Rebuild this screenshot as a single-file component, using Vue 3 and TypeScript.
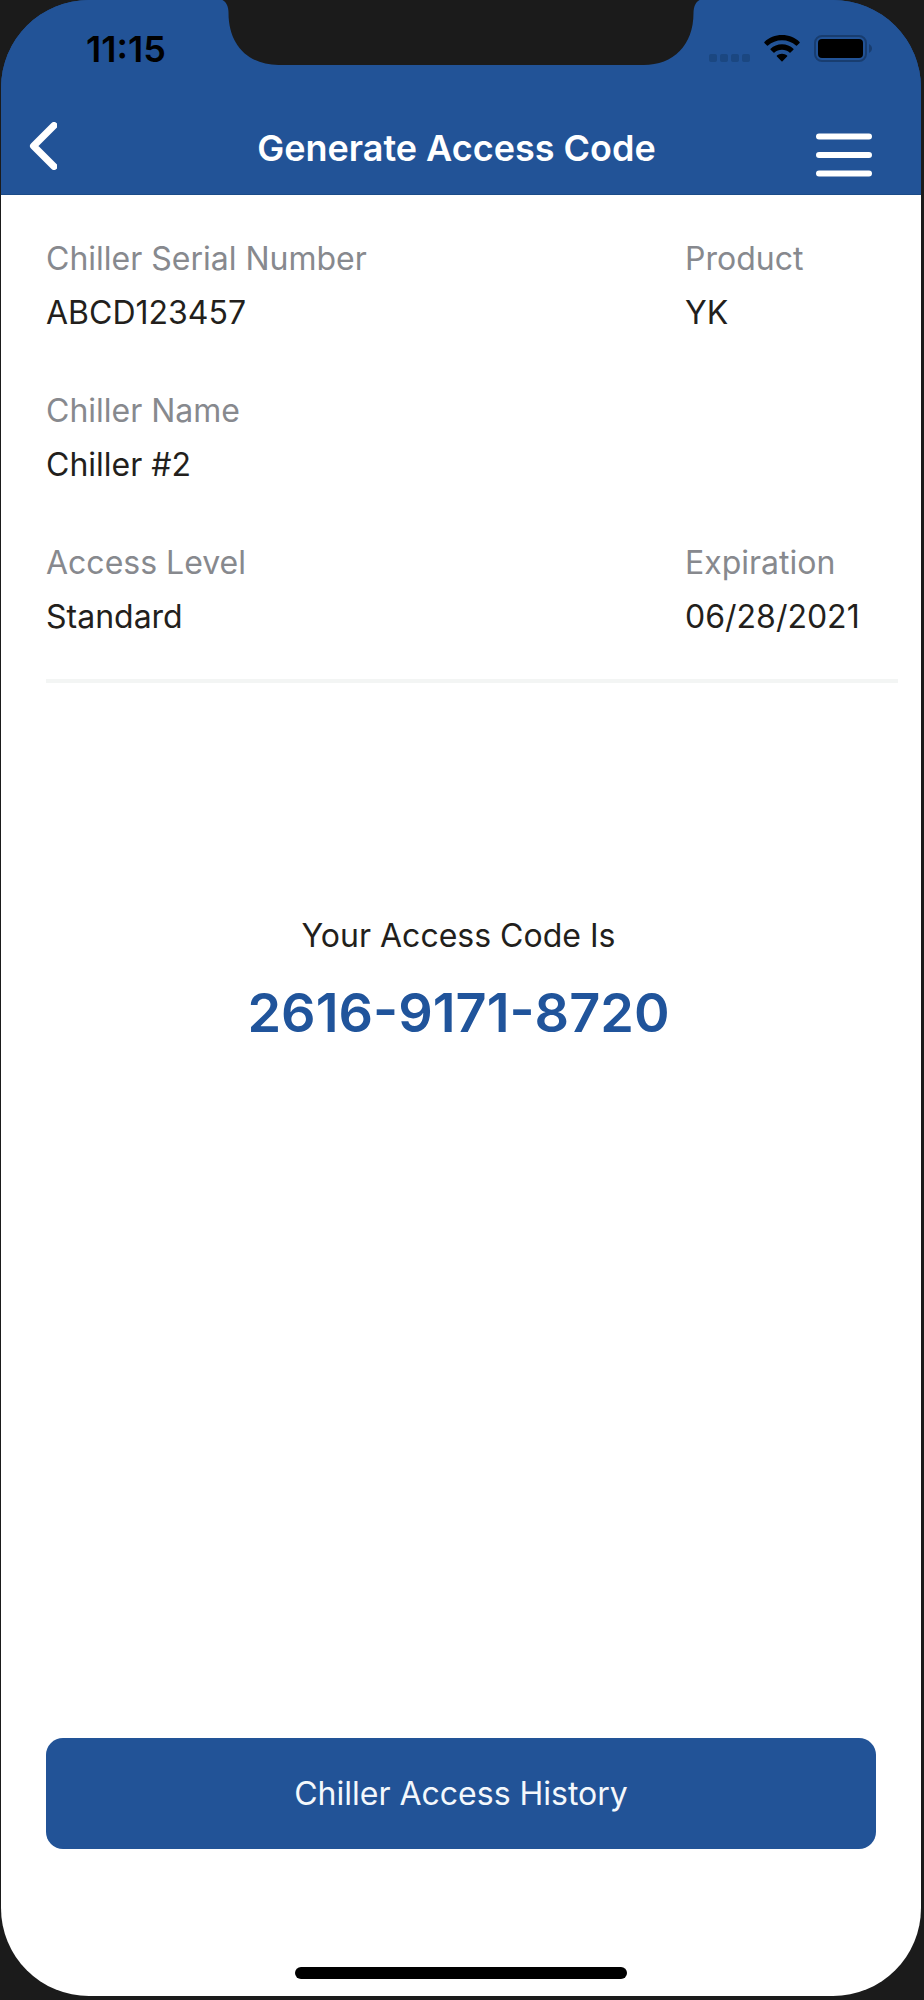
<script setup lang="ts">
interface Field {
  label: string
  value: string
}

const rows: Field[][] = [
  [
    { label: 'Chiller Serial Number', value: 'ABCD123457' },
    { label: 'Product', value: 'YK' },
  ],
  [{ label: 'Chiller Name', value: 'Chiller #2' }],
  [
    { label: 'Access Level', value: 'Standard' },
    { label: 'Expiration', value: '06/28/2021' },
  ],
]

const accessCode = '2616-9171-8720'
</script>

<template>
  <div class="device">
    <div class="screen">
      <svg class="notch" viewBox="0 0 481 66" aria-hidden="true">
        <path d="M2 0C6 2 8 7 8 13C8 45 28 65 58 65H423C453 65 473 45 473 13C473 7 475 2 479 0Z" />
      </svg>

      <header class="top">
        <div class="status">
          <time class="clock">11:15</time>
          <div class="indicators">
            <svg class="dots" viewBox="0 0 41 27" aria-hidden="true">
              <rect x="0" y="19" width="8" height="8" rx="2" />
              <rect x="11" y="19" width="8" height="8" rx="2" />
              <rect x="22" y="19" width="8" height="8" rx="2" />
              <rect x="33" y="19" width="8" height="8" rx="2" />
            </svg>
            <svg class="wifi" viewBox="0 0 36 27" aria-hidden="true">
              <path d="M18 0C11.200 0 5 2.600 .4 6.900Q0 7.400 .4 7.900L3 10.600Q3.500 11 4 10.600C7.700 7.200 12.600 5.300 18 5.300S28.300 7.200 32 10.600Q32.500 11 33 10.600L35.600 7.900Q36 7.400 35.600 6.900C31 2.600 24.800 0 18 0Z" />
              <path d="M18 9.300C13.600 9.300 9.600 11 6.600 13.700Q6.100 14.200 6.600 14.700L9.500 17.600Q10 18 10.500 17.600C12.500 15.800 15.100 14.800 18 14.800S23.500 15.800 25.500 17.600Q26 18 26.500 17.600L29.400 14.700Q29.900 14.200 29.400 13.700C26.400 11 22.400 9.300 18 9.300Z" />
              <path d="M18 18.700C16.100 18.700 14.300 19.400 12.900 20.500Q12.400 21 12.900 21.500L17.500 26.300Q18 26.800 18.500 26.300L23.100 21.500Q23.600 21 23.100 20.500C21.700 19.400 19.900 18.700 18 18.700Z" />
            </svg>
            <svg class="battery" viewBox="0 0 58 27" aria-hidden="true">
              <rect class="shell" x="1" y="1" width="51" height="25" rx="7" />
              <rect x="4" y="4" width="45" height="19" rx="4" />
              <path class="nub" d="M55 9C59 11 59 16 55 18Z" />
            </svg>
          </div>
        </div>

        <nav class="bar">
          <button class="back" type="button" aria-label="Back">
            <svg viewBox="0 0 28 48" aria-hidden="true">
              <path d="M25 3.500L4.500 24L25 44.500" />
            </svg>
          </button>
          <h1>Generate Access Code</h1>
          <button class="menu" type="button" aria-label="Menu">
            <svg viewBox="0 0 56 44" aria-hidden="true">
              <path d="M3 3.500H53M3 22H53M3 40.500H53" />
            </svg>
          </button>
        </nav>
      </header>

      <main>
        <section class="details">
          <dl v-for="(row, i) in rows" :key="i" class="row">
            <div v-for="field in row" :key="field.label">
              <dt>{{ field.label }}</dt>
              <dd>{{ field.value }}</dd>
            </div>
          </dl>
          <hr />
        </section>

        <section class="code">
          <p>Your Access Code Is</p>
          <strong>{{ accessCode }}</strong>
        </section>

        <div class="actions">
          <button class="history" type="button">Chiller Access History</button>
        </div>
      </main>

      <div class="home"></div>
    </div>
  </div>
</template>

<style>
body {
  margin: 0;
  background: #1b1b1b;
}
</style>

<style scoped>
.device {
  box-sizing: border-box;
  display: flex;
  min-height: 100vh;
  padding: 0 3px 4px 1px;
  background: #1b1b1b;
  font-family: Inter, "Liberation Sans", sans-serif;
  font-size: 32px;
  line-height: 54px;
  color: #231f1c;
}

.screen {
  position: relative;
  flex: 1;
  display: flex;
  flex-direction: column;
  overflow: hidden;
  border-radius: 88px;
  background: linear-gradient(#225397 150px, #fff 150px);
}

.notch {
  position: absolute;
  top: 0;
  left: 50%;
  width: 481px;
  height: 66px;
  transform: translateX(-50%);
  fill: #1b1b1b;
}

.top {
  background: #225397;
  color: #fff;
}

.status {
  display: flex;
  align-items: center;
  justify-content: space-between;
  height: 97px;
  padding: 0 49px 0 85px;
  color: #000;
}

.clock {
  font-size: 36px;
  font-weight: 600;
}

.indicators {
  display: flex;
  gap: 14px;
}

.indicators svg {
  display: block;
  height: 27px;
}

.dots {
  width: 41px;
  fill: #1b4781;
}

.wifi {
  width: 36px;
}

.battery {
  width: 58px;
}

.shell {
  fill: none;
  stroke: #183d70;
  stroke-width: 2;
}

.nub {
  fill: #183d70;
}

.bar {
  box-sizing: border-box;
  display: grid;
  grid-template-columns: 96px 1fr 105px;
  height: 98px;
  border-bottom: 1px solid #1b4b88;
}

.bar button {
  display: flex;
  align-items: center;
  border: 0;
  background: none;
  cursor: pointer;
}

.bar path {
  fill: none;
  stroke: #fff;
  stroke-linecap: round;
  stroke-linejoin: round;
}

.back {
  padding: 0 0 0 28px;
}

.back svg {
  width: 28px;
  height: 48px;
  stroke-width: 7;
}

.menu {
  padding: 18px 0 0;
}

.menu svg {
  width: 56px;
  height: 44px;
  stroke-width: 6;
}

h1 {
  margin: 0;
  padding-top: 4px;
  font-size: 36px;
  font-weight: 600;
  line-height: 94px;
  text-align: center;
  white-space: nowrap;
}

main {
  flex: 1;
  display: flex;
  flex-direction: column;
}

.details {
  padding: 37px 23px 0 45px;
}

.row {
  display: grid;
  grid-template-columns: 3fr 1fr;
  margin: 0 0 44px;
}

.row:last-of-type {
  margin-bottom: 35px;
}

dt {
  color: #87898e;
}

dd {
  margin: 0;
}

hr {
  height: 4px;
  margin: 0;
  border: 0;
  background: #f3f5f4;
}

.code {
  flex: 1;
  padding: 226px 5px 0 0;
  text-align: center;
}

.code p {
  margin: 0;
}

.code strong {
  display: block;
  font-size: 54px;
  font-weight: 600;
  line-height: 100px;
  color: #20549b;
}

.actions {
  padding: 0 45px;
}

.history {
  display: block;
  width: 100%;
  height: 111px;
  border: 0;
  border-radius: 17px;
  background: #225397;
  color: #f4f8fc;
  font: inherit;
  cursor: pointer;
}

.home {
  width: 36%;
  height: 12px;
  margin: 118px auto 17px;
  border-radius: 6px;
  background: #000;
}
</style>
